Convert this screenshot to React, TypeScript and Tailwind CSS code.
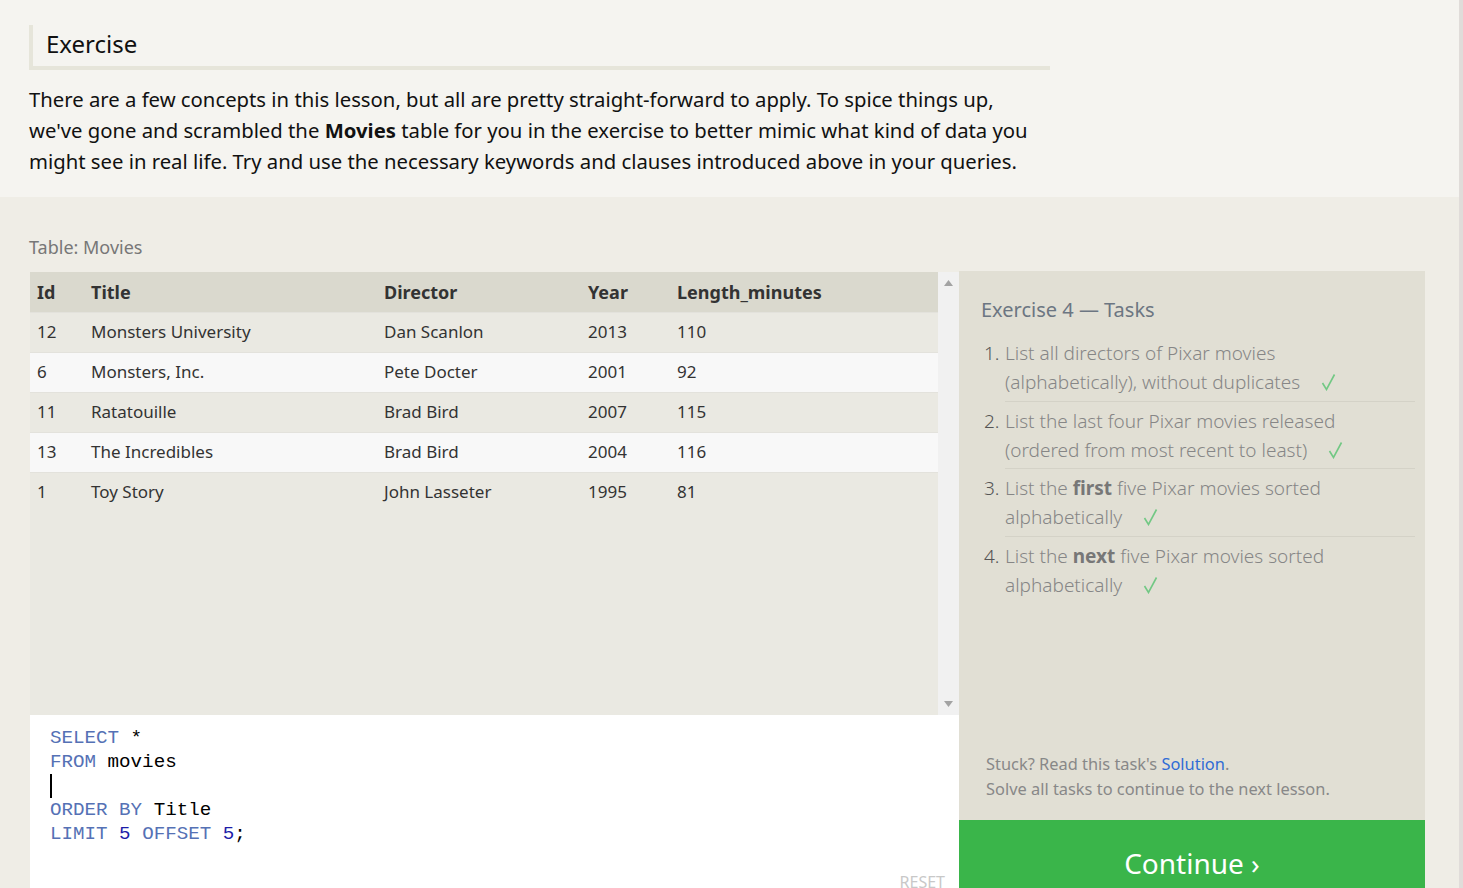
const movies = [
  { id: 12, title: "Monsters University", director: "Dan Scanlon", year: 2013, length: 110 },
  { id: 6, title: "Monsters, Inc.", director: "Pete Docter", year: 2001, length: 92 },
  { id: 11, title: "Ratatouille", director: "Brad Bird", year: 2007, length: 115 },
  { id: 13, title: "The Incredibles", director: "Brad Bird", year: 2004, length: 116 },
  { id: 1, title: "Toy Story", director: "John Lasseter", year: 1995, length: 81 },
]

const cols = "grid grid-cols-[54px_293px_204px_89px_1fr]"

function Check() {
  return (
    <svg className="ml-[16px] inline-block align-[-2px]" width="15" height="18" viewBox="0 0 15 18">
      <path d="M1.5 10 L5.5 16.5 L13.5 1.5" fill="none" stroke="#72c884" strokeWidth="1.6" />
    </svg>
  )
}

function Task({ n, last, children }: { n: number; last?: boolean; children: React.ReactNode }) {
  return (
    <li className="flex">
      <span className="w-[24px] shrink-0 pt-[5px] pl-[3px] text-[#555]">{n}.</span>
      <div className={`flex-1 pt-[5px] pb-[3.5px] ${last ? "" : "border-b border-[#d4d2c7]"}`}>{children}</div>
    </li>
  )
}

export default function App() {
  return (
    <div className="flex min-h-screen bg-[#efede6] font-['Noto_Sans',sans-serif]">
      <div className="flex-1">
        {/* Intro */}
        <div className="h-[197px] bg-[#f5f4f0] px-[29px] pt-[25px]">
          <div className="h-[45px] w-[1021px] border-b-4 border-l-4 border-[#e6e5da] pl-[13px] pt-[2px] text-[24px] leading-[34px] text-[#111]">
            Exercise
          </div>
          <p className="mt-[14px] w-[1040px] text-[20.3px] leading-[31px] text-[#111]">
            There are a few concepts in this lesson, but all are pretty straight-forward to apply. To spice things up,
            <br />
            we've gone and scrambled the <b>Movies</b> table for you in the exercise to better mimic what kind of data you
            <br />
            might see in real life. Try and use the necessary keywords and clauses introduced above in your queries.
          </p>
        </div>

        {/* Exercise */}
        <div className="pl-[30px] pt-[37px]">
          <div className="-ml-px mb-[11px] text-[18px] leading-[27px] text-[#777]">Table: Movies</div>
          <div className="flex">
            <div className="w-[929px]">
              <div className="flex h-[443px]">
                <div className="w-[908px] bg-[#eae9e2] text-[17px] text-[#333]">
                  <div className={`${cols} h-[40px] items-center bg-[#dad9ce] pt-[1px] text-[18px] font-bold text-[#333]`}>
                    <div className="px-[7px]">Id</div>
                    <div className="px-[7px]">Title</div>
                    <div className="px-[7px]">Director</div>
                    <div className="px-[7px]">Year</div>
                    <div className="px-[7px]">Length_minutes</div>
                  </div>
                  {movies.map((m, i) => (
                    <div
                      key={m.id}
                      className={`${cols} h-[40px] items-center border-t border-[#e3e2dc] pb-[1px] ${i % 2 ? "bg-[#f8f8f8]" : "bg-[#eae9e2]"}`}
                    >
                      <div className="px-[7px]">{m.id}</div>
                      <div className="px-[7px]">{m.title}</div>
                      <div className="px-[7px]">{m.director}</div>
                      <div className="px-[7px]">{m.year}</div>
                      <div className="px-[7px]">{m.length}</div>
                    </div>
                  ))}
                </div>
                <div className="flex w-[21px] flex-col items-center justify-between bg-[#f1f1f1] py-[8px]">
                  <svg width="9" height="6" viewBox="0 0 9 6"><path d="M4.5 0 L9 6 L0 6 Z" fill="#a3a3a3" /></svg>
                  <svg width="9" height="6" viewBox="0 0 9 6"><path d="M0 0 L9 0 L4.5 6 Z" fill="#a3a3a3" /></svg>
                </div>
              </div>
              <div className="relative h-[200px] bg-white pl-[20px] pt-[11px] font-['Liberation_Mono',monospace] text-[19.2px] leading-[24px] text-black">
                <div><span className="text-[#5571b5]">SELECT</span> *</div>
                <div><span className="text-[#5571b5]">FROM</span> movies</div>
                <div className="h-[24px]"><span className="inline-block h-[24px] w-[2px] bg-black align-top" /></div>
                <div><span className="text-[#5571b5]">ORDER BY</span> Title</div>
                <div>
                  <span className="text-[#5571b5]">LIMIT</span> <span className="text-[#1c1ca8]">5</span>{" "}
                  <span className="text-[#5571b5]">OFFSET</span> <span className="text-[#1c1ca8]">5</span>;
                </div>
                <div className="absolute right-[14px] top-[155px] font-['Noto_Sans',sans-serif] text-[16px] text-[#c8c8c8]">RESET</div>
              </div>
            </div>

            {/* Tasks panel */}
            <div className="flex w-[466px] -mt-px flex-col">
              <div className="flex h-[549px] flex-col bg-[#e1dfd4] pl-[22px] pr-[10px] pt-[24px]">
                <div className="text-[20px] leading-[30px] text-[#6c7682]">Exercise 4 — Tasks</div>
                <ol className="mt-[9px] text-[19px] leading-[29px] text-[#868686] font-light">
                  <Task n={1}>
                    List all directors of Pixar movies
                    <br />
                    (alphabetically), without duplicates <Check />
                  </Task>
                  <Task n={2}>
                    List the last four Pixar movies released
                    <br />
                    (ordered from most recent to least) <Check />
                  </Task>
                  <Task n={3}>
                    List the <b className="font-bold text-[#777]">first</b> five Pixar movies sorted
                    <br />
                    alphabetically <Check />
                  </Task>
                  <Task n={4} last>
                    List the <b className="font-bold text-[#777]">next</b> five Pixar movies sorted
                    <br />
                    alphabetically <Check />
                  </Task>
                </ol>
                <div className="mt-auto pb-[19px] pl-[5px] text-[16.4px] leading-[25px] text-[#888]">
                  <div>
                    Stuck? Read this task's <span className="text-[#2f6cd6]">Solution</span>.
                  </div>
                  <div>Solve all tasks to continue to the next lesson.</div>
                </div>
              </div>
              <div className="flex h-[90px] items-center justify-center bg-[#3ab54a] pb-[4px] text-[28px] text-white">
                Continue ›
              </div>
            </div>
          </div>
        </div>
      </div>
      <div className="w-[4px] bg-[#e0dcd9]" />
    </div>
  )
}
